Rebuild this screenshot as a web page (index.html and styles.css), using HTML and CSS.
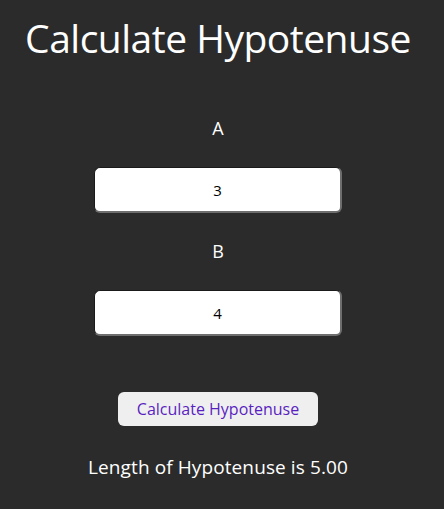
FILE: index.html
```html
<!DOCTYPE html>
<html>
<head>
<meta charset="utf-8">
<link rel="stylesheet" href="styles.css">
</head>
<body>
<main class="app">
  <h1 class="title">Calculate Hypotenuse</h1>
  <div class="field">
    <label class="label" for="a">A</label>
    <input class="input" id="a" type="text" value="3">
  </div>
  <div class="field">
    <label class="label" for="b">B</label>
    <input class="input" id="b" type="text" value="4">
  </div>
  <button class="btn" type="button">Calculate Hypotenuse</button>
  <p class="result">Length of Hypotenuse is 5.00</p>
</main>
</body>
</html>
```
FILE: styles.css
```css
html, body {
  margin: 0;
  padding: 0;
  background: #2b2b2b;
}
body {
  font-family: "Open Sans", "Noto Sans", sans-serif;
  color: #ffffff;
}
.app {
  display: flex;
  flex-direction: column;
  align-items: center;
  width: 436px;
}
.title {
  margin: 14px 0 0;
  font-size: 39px;
  font-weight: 400;
  line-height: 48px;
  letter-spacing: -0.5px;
}
.field {
  display: flex;
  flex-direction: column;
  align-items: center;
}
.label {
  margin-top: 54px;
  font-size: 18px;
  line-height: 24px;
}
.field + .field .label {
  margin-top: 26px;
}
.input {
  margin-top: 27px;
  width: 248px;
  height: 46px;
  box-sizing: border-box;
  border-style: solid;
  border-width: 1px 2px 2px 1px;
  border-color: #1a1a1a #6e6e6e #6e6e6e #1a1a1a;
  border-radius: 6px;
  background: #fff;
  text-align: center;
  font-family: "Open Sans", sans-serif;
  font-size: 15px;
  color: #000;
  outline: none;
}
.btn {
  margin-top: 56px;
  width: 200px;
  height: 34px;
  border: none;
  border-radius: 6px;
  background: #efefef;
  color: #5a1fc1;
  font-family: "Open Sans", sans-serif;
  font-size: 16px;
}
.result {
  margin: 29px 0 0;
  font-size: 19px;
  line-height: 24px;
  letter-spacing: 0.1px;
}
```
